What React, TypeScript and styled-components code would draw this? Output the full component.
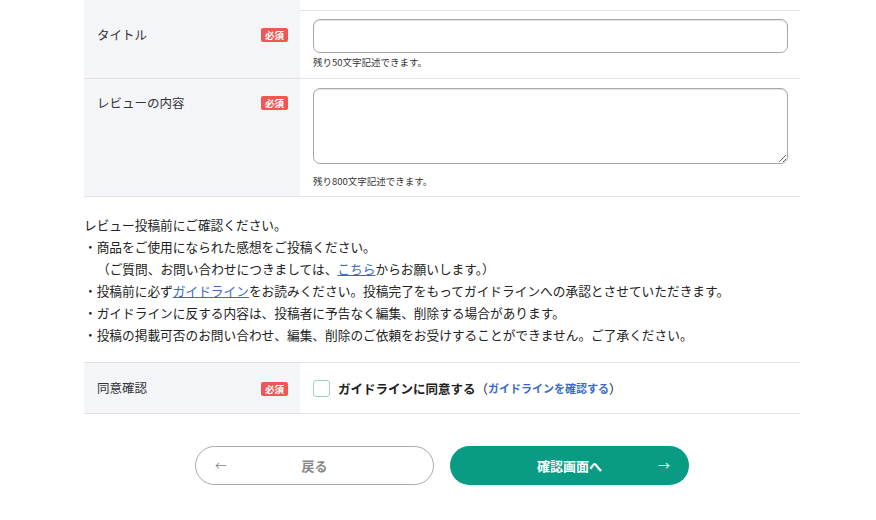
import React from 'react';
import styled, { createGlobalStyle } from 'styled-components';

const GlobalStyle = createGlobalStyle`
  body {
    margin: 0;
    background: #fff;
    font-family: "Noto Sans CJK JP", "Noto Sans", sans-serif;
    color: #222;
  }
`;

const S = {
  Page: styled.div`
    width: 716px;
    margin-left: 84px;
  `,
  Row: styled.div<{ $stub?: boolean }>`
    display: flex;
    border-bottom: 1px solid #e2e2e4;
    ${(p) => (p.$stub ? 'height: 10px;' : '')}
  `,
  LabelCell: styled.div<{ $center?: boolean }>`
    width: 216px;
    flex-shrink: 0;
    box-sizing: border-box;
    background: #f4f5f9;
    display: flex;
    justify-content: space-between;
    align-items: ${(p) => (p.$center ? 'center' : 'flex-start')};
    padding: ${(p) => (p.$center ? '0 12px 0 13px' : '15px 12px 0 13px')};
  `,
  Label: styled.span`
    font-size: 12.5px;
    line-height: 18px;
    color: #333;
  `,
  Badge: styled.span`
    display: inline-block;
    background: #ef5752;
    color: #fff;
    font-size: 9.5px;
    font-weight: 700;
    line-height: 14px;
    padding: 0 4px;
    border-radius: 2px;
    margin-top: 2px;
  `,
  FieldCell: styled.div<{ $center?: boolean; $top?: number; $bottom?: number }>`
    flex: 1;
    padding: ${(p) =>
      p.$center ? '0 12px 0 13px' : `${p.$top ?? 8}px 12px ${p.$bottom ?? 8}px 13px`};
    display: flex;
    flex-direction: column;
    ${(p) => (p.$center ? 'min-height: 50px; flex-direction: row; align-items: center;' : '')}
  `,
  TextInput: styled.input`
    box-sizing: border-box;
    width: 475px;
    height: 34px;
    border: 1px solid #a8a8a8;
    border-radius: 7px;
    box-shadow: inset 0 1px 1px rgba(0, 0, 0, 0.12);
    outline: none;
  `,
  TextArea: styled.textarea`
    box-sizing: border-box;
    width: 475px;
    height: 76px;
    border: 1px solid #a8a8a8;
    border-radius: 7px;
    box-shadow: inset 0 1px 1px rgba(0, 0, 0, 0.12);
    outline: none;
    margin: 0;
  `,
  Hint: styled.p<{ $gap: number }>`
    margin: ${(p) => p.$gap}px 0 0;
    font-size: 9.5px;
    line-height: 14px;
    color: #333;
  `,
  Notice: styled.div`
    padding: 17px 0 16px;
    border-bottom: 1px solid #e2e2e4;
    font-size: 12.7px;
    line-height: 22px;
    color: #222;
    p {
      margin: 0;
    }
  `,
  Indent: styled.p`
    padding-left: 13px;
  `,
  Link: styled.a`
    color: #3a6ac9;
    text-decoration: underline;
  `,
  Check: styled.span`
    box-sizing: border-box;
    width: 17px;
    height: 17px;
    border: 1.5px solid #9fd3c1;
    border-radius: 3px;
    margin-right: 8px;
    flex-shrink: 0;
  `,
  AgreeText: styled.span`
    font-size: 12.5px;
    font-weight: 700;
    color: #222;
  `,
  AgreeLink: styled.a`
    font-size: 11px;
    font-weight: 700;
    color: #3a6ac9;
    text-decoration: none;
  `,
  Paren: styled.span`
    font-size: 12.5px;
    color: #222;
  `,
  Buttons: styled.div`
    display: flex;
    justify-content: center;
    gap: 16px;
    margin-top: 32px;
  `,
  Button: styled.button<{ $primary?: boolean }>`
    position: relative;
    width: 239px;
    height: 39px;
    box-sizing: border-box;
    border-radius: 20px;
    border: ${(p) => (p.$primary ? 'none' : '1px solid #aaa')};
    background: ${(p) => (p.$primary ? '#0a9b85' : '#fff')};
    color: ${(p) => (p.$primary ? '#fff' : '#888')};
    font-family: inherit;
    font-size: 13px;
    font-weight: 700;
    cursor: pointer;
  `,
  Arrow: styled.span<{ $side: 'left' | 'right' }>`
    position: absolute;
    top: 50%;
    transform: translateY(-55%);
    ${(p) => (p.$side === 'left' ? 'left: 19px;' : 'right: 19px;')}
    font-size: 12px;
    font-weight: 400;
  `,
};

function Required() {
  return <S.Badge>必須</S.Badge>;
}

export default function App() {
  return (
    <>
      <GlobalStyle />
      <S.Page>
        <S.Row $stub>
          <S.LabelCell />
        </S.Row>

        <S.Row>
          <S.LabelCell>
            <S.Label>タイトル</S.Label>
            <Required />
          </S.LabelCell>
          <S.FieldCell $bottom={9}>
            <S.TextInput type="text" />
            <S.Hint $gap={2}>残り50文字記述できます。</S.Hint>
          </S.FieldCell>
        </S.Row>

        <S.Row>
          <S.LabelCell>
            <S.Label>レビューの内容</S.Label>
            <Required />
          </S.LabelCell>
          <S.FieldCell $top={9} $bottom={8}>
            <S.TextArea />
            <S.Hint $gap={10}>残り800文字記述できます。</S.Hint>
          </S.FieldCell>
        </S.Row>

        <S.Notice>
          <p>レビュー投稿前にご確認ください。</p>
          <p>・商品をご使用になられた感想をご投稿ください。</p>
          <S.Indent>
            （ご質問、お問い合わせにつきましては、<S.Link href="#">こちら</S.Link>からお願いします。）
          </S.Indent>
          <p>
            ・投稿前に必ず<S.Link href="#">ガイドライン</S.Link>をお読みください。投稿完了をもってガイドラインへの承認とさせていただきます。
          </p>
          <p>・ガイドラインに反する内容は、投稿者に予告なく編集、削除する場合があります。</p>
          <p>・投稿の掲載可否のお問い合わせ、編集、削除のご依頼をお受けすることができません。ご了承ください。</p>
        </S.Notice>

        <S.Row>
          <S.LabelCell $center>
            <S.Label>同意確認</S.Label>
            <Required />
          </S.LabelCell>
          <S.FieldCell $center>
            <S.Check />
            <S.AgreeText>ガイドラインに同意する</S.AgreeText>
            <S.Paren>（</S.Paren>
            <S.AgreeLink href="#">ガイドラインを確認する</S.AgreeLink>
            <S.Paren>）</S.Paren>
          </S.FieldCell>
        </S.Row>

        <S.Buttons>
          <S.Button>
            <S.Arrow $side="left">←</S.Arrow>
            戻る
          </S.Button>
          <S.Button $primary>
            確認画面へ
            <S.Arrow $side="right">→</S.Arrow>
          </S.Button>
        </S.Buttons>
      </S.Page>
    </>
  );
}
